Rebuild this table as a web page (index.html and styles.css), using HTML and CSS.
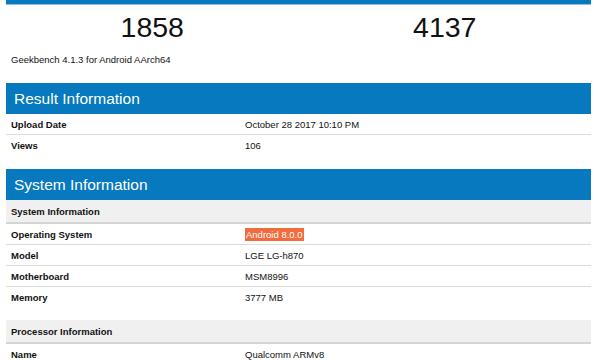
FILE: index.html
```html
<!DOCTYPE html>
<html>
<head>
<meta charset="utf-8">
<link rel="stylesheet" href="styles.css">
</head>
<body>
<div class="page">
  <div class="topbar"></div>
  <div class="scores">
    <div class="score">1858</div>
    <div class="score">4137</div>
  </div>
  <div class="note">Geekbench 4.1.3 for Android AArch64</div>

  <div class="section-head">Result Information</div>
  <table class="info">
    <tr class="line"><th>Upload Date</th><td>October 28 2017 10:10 PM</td></tr>
    <tr><th>Views</th><td>106</td></tr>
  </table>

  <div class="section-head second">System Information</div>
  <table class="info">
    <tr class="sub"><th colspan="2">System Information</th></tr>
    <tr class="line"><th>Operating System</th><td><span class="mark">Android 8.0.0</span></td></tr>
    <tr class="line"><th>Model</th><td>LGE LG-h870</td></tr>
    <tr class="line"><th>Motherboard</th><td>MSM8996</td></tr>
    <tr><th>Memory</th><td>3777 MB</td></tr>
    <tr class="spacer"><td colspan="2"></td></tr>
    <tr class="sub"><th colspan="2">Processor Information</th></tr>
    <tr><th>Name</th><td>Qualcomm ARMv8</td></tr>
  </table>
</div>
</body>
</html>
```
FILE: styles.css
```css
html, body {
  margin: 0;
  padding: 0;
  background: #ffffff;
}
body {
  font-family: "Liberation Sans", Arial, sans-serif;
  color: #111;
}
.page {
  width: 585px;
  margin-left: 6px;
}
.topbar {
  height: 4px;
  background: #0779be;
  border-bottom: 1px solid #8dbde0;
}
.scores {
  display: grid;
  grid-template-columns: 1fr 1fr;
  height: 44px;
}
.score {
  text-align: center;
  font-size: 28.5px;
  line-height: 44px;
  color: #111;
}
.note {
  font-size: 9.5px;
  line-height: 14px;
  padding: 4px 0 0 5px;
  height: 30px;
  color: #111;
}
.section-head {
  background: #0779be;
  color: #ffffff;
  height: 31px;
  line-height: 31px;
  font-size: 15.5px;
  padding-left: 8px;
}
.section-head.second {
  margin-top: 14px;
}
.info {
  width: 100%;
  border-collapse: collapse;
  font-size: 9.5px;
}
.info th, .info td {
  height: 20px;
  padding: 0 5px;
  text-align: left;
  vertical-align: middle;
}
.info th {
  width: 40%;
  font-weight: bold;
  box-sizing: border-box;
}
.info tr.line th, .info tr.line td {
  border-bottom: 1px solid #dcdcdc;
}
.info tr.sub th {
  background: #f0f0f0;
  height: 23px;
  border-bottom: 2px solid #d4d4d4;
  font-weight: bold;
}
.info tr.spacer td {
  height: 13px;
  padding: 0;
}
.mark {
  background: #f06c3c;
  color: #ffffff;
  padding: 1px 1px;
}
```
